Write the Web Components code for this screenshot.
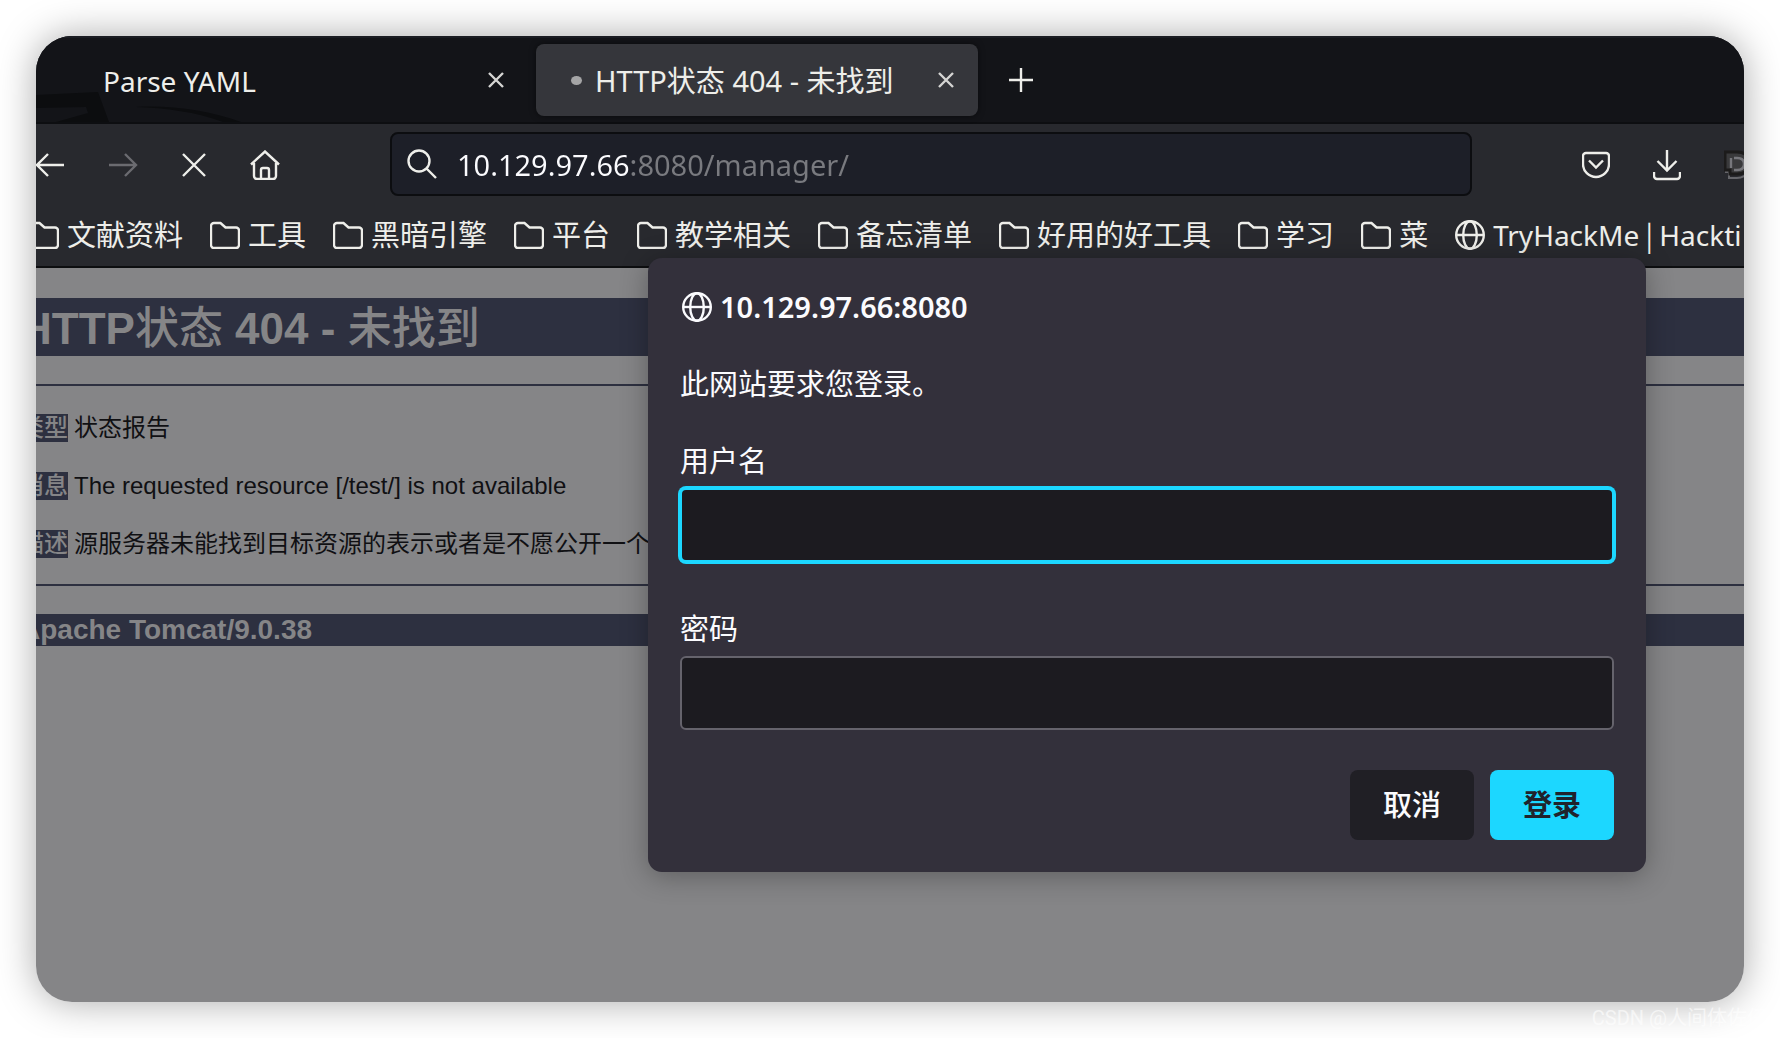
<!DOCTYPE html>
<html lang="zh-CN">
<head>
<meta charset="utf-8">
<title>HTTP状态 404 - 未找到</title>
<style>
  html { background: #fff; }
  body {
    margin: 0;
    font-family: "Noto Sans", "Noto Sans CJK SC", sans-serif;
    font-size: 29px;
    line-height: 40px;
  }
</style>
</head>
<body>
<browser-desktop></browser-desktop>

<script>
const ICONS = {
  close: ['0 0 16 16', '<path d="M1 1l14 14M15 1L1 15"/>'],
  plus: ['0 0 24 24', '<path d="M12 0v24M0 12h24"/>'],
  back: ['0 0 30 26', '<path d="M29 13H2M13 2L2 13l11 11"/>'],
  forward: ['0 0 30 26', '<path d="M1 13h27M17 2l11 11-11 11"/>'],
  stop: ['0 0 26 26', '<path d="M2 2l22 22M24 2L2 24"/>'],
  home: ['0 0 30 30', '<path d="M1 14.500L15 1.500l14 13M4 13v13a3 3 0 0 0 3 3h16a3 3 0 0 0 3-3V13M11 29V20a2 2 0 0 1 2-2h4a2 2 0 0 1 2 2v9"/>'],
  search: ['0 0 30 30', '<circle cx="12" cy="12" r="10.500"/><path d="M19.500 19.500L29 29"/>'],
  pocket: ['0 0 28 28', '<path d="M4 2h20a3 3 0 0 1 3 3v8a13 13 0 0 1-26 0V5a3 3 0 0 1 3-3zM7 9.500l7 7 7-7"/>'],
  download: ['0 0 28 32', '<path d="M14 1v20M4.500 12l9.500 9.500L23.500 12M1 23v4a3 3 0 0 0 3 3h20a3 3 0 0 0 3-3v-4"/>'],
  folder: ['0 0 30 28', '<path d="M4 2h6.500l5 4.500H26a3 3 0 0 1 3 3V24a3 3 0 0 1-3 3H4a3 3 0 0 1-3-3V5a3 3 0 0 1 3-3z"/>'],
  globe: ['0 0 30 30', '<circle cx="15" cy="15" r="13.800"/><ellipse cx="15" cy="15" rx="6.800" ry="13.800"/><path d="M1.500 15h27"/>'],
  dark: ['0 0 32 32', '<path stroke="#66666b" stroke-width="2" d="M1 23h4v6h8c8 0 13-6 13-13"/><path fill="#3a3a3c" stroke="#1c1b1b" stroke-width="3" d="M1 3h12c8 0 12 4 12 11s-4 11-12 11H6V21H1z"/><path stroke="#77777c" d="M7 9v10M10 9h3c5 0 7 2 7 6s-2 6-7 6h-3"/>']
};

class UiIcon extends HTMLElement {
  connectedCallback() {
    const [box, shape] = ICONS[this.getAttribute('name')];
    const [, , w, h] = box.split(' ');
    this.attachShadow({ mode: 'open' }).innerHTML = `
      <style>
        :host { display: block; flex: none; width: ${w}px; height: ${h}px; }
        svg { display: block; width: 100%; height: 100%; fill: none; stroke: currentColor; stroke-width: 2.4; }
      </style>
      <svg viewBox="${box}" aria-hidden="true">${shape}</svg>`;
  }
}
customElements.define('ui-icon', UiIcon);

function define(name, html) {
  const template = document.createElement('template');
  template.innerHTML = html;
  customElements.define(name, class extends HTMLElement {
    constructor() {
      super();
      this.attachShadow({ mode: 'open' }).append(template.content.cloneNode(true));
    }
  });
}

define('browser-tab', `
  <style>
    :host { display: flex; align-items: center; box-sizing: border-box; height: 72px; padding: 0 24px 0 35px; border-radius: 8px; }
    :host([active]) { background: #35363b; box-shadow: 0 0 6px rgba(0,0,0,.5); }
    .dot { flex: none; width: 11px; height: 9px; border-radius: 50%; background: #a5a5a6; margin-right: 13px; visibility: hidden; }
    :host([active]) .dot { visibility: visible; }
    .title { flex: 1; padding-top: 2px; white-space: nowrap; }
    button { all: unset; display: block; cursor: pointer; color: #d5d5d3; }
  </style>
  <span class="dot"></span><span class="title"><slot></slot></span>
  <button aria-label="关闭标签页"><ui-icon name="close"></ui-icon></button>`);

define('tab-strip', `
  <style>
    :host { display: flex; align-items: center; position: relative; box-sizing: border-box; height: 88px; background: #131418; border-top: 2px solid #1b1d23; border-bottom: 2px solid #0d0e11; color: #eeeeea; }
    .art { position: absolute; left: 0; bottom: 0; width: 220px; height: 30px; }
    browser-tab { position: relative; }
    .first { width: 484px; margin: 0 8px; font-size: 28px; }
    .second { width: 442px; }
    .add { all: unset; display: block; cursor: pointer; margin-left: 31px; }
  </style>
  <svg class="art" viewBox="0 0 220 30" aria-hidden="true">
    <path fill="#0c0d0f" d="M0 3L62 0 73 30H55L50 15 0 16zM20 30L52 21 58 30z"/>
    <path fill="#0c0d0f" d="M100 15c35-2 75 4 105 15h-18C160 20 130 16 100 15z"/>
  </svg>
  <browser-tab class="first">Parse YAML</browser-tab>
  <browser-tab class="second" active>HTTP状态 404 - 未找到</browser-tab>
  <button class="add" aria-label="新建标签页"><ui-icon name="plus"></ui-icon></button>`);

define('nav-bar', `
  <style>
    :host { display: flex; align-items: center; height: 80px; color: #eeeeea; }
    button { all: unset; display: block; cursor: pointer; flex: none; }
    .left { display: flex; align-items: center; gap: 43px; margin-left: -1px; padding-top: 2px; width: 355px; }
    .off { color: #6b6b70; }
    .url { flex: 1; display: flex; align-items: center; gap: 20px; box-sizing: border-box; height: 64px; padding: 0 15px; border: 2px solid #0c0d10; border-radius: 8px; background: #1d1f28; }
    input { all: unset; flex: 1; min-width: 0; padding-top: 2px; font-size: 29px; line-height: 40px; color: transparent; background: linear-gradient(90deg, #fbfbfe 173px, #797a7f 173px); -webkit-background-clip: text; background-clip: text; }
    .right { display: flex; align-items: center; gap: 43px; margin-left: 110px; margin-right: -12px; padding-top: 2px; }
  </style>
  <div class="left">
    <button aria-label="后退"><ui-icon name="back"></ui-icon></button>
    <button class="off" aria-label="前进"><ui-icon name="forward"></ui-icon></button>
    <button aria-label="停止"><ui-icon name="stop"></ui-icon></button>
    <button aria-label="主页"><ui-icon name="home"></ui-icon></button>
  </div>
  <div class="url"><ui-icon name="search"></ui-icon><input type="text" aria-label="地址" value="10.129.97.66:8080/manager/"></div>
  <div class="right">
    <button aria-label="Pocket"><ui-icon name="pocket"></ui-icon></button>
    <button aria-label="下载"><ui-icon name="download"></ui-icon></button>
    <button aria-label="扩展"><ui-icon name="dark"></ui-icon></button>
  </div>`);

define('bookmark-list', `
  <style>
    :host { display: flex; gap: 27px; height: 62px; margin-left: -7px; white-space: nowrap; color: #eeeeea; }
    a { display: flex; align-items: center; gap: 8px; flex: none; height: 62px; color: inherit; text-decoration: none; }
    .site { font-size: 28px; }
    .bar { font-family: "Noto Sans CJK SC", sans-serif; line-height: 1; }
  </style>
  <a href="#"><ui-icon name="folder"></ui-icon><span>文献资料</span></a>
  <a href="#"><ui-icon name="folder"></ui-icon><span>工具</span></a>
  <a href="#"><ui-icon name="folder"></ui-icon><span>黑暗引擎</span></a>
  <a href="#"><ui-icon name="folder"></ui-icon><span>平台</span></a>
  <a href="#"><ui-icon name="folder"></ui-icon><span>教学相关</span></a>
  <a href="#"><ui-icon name="folder"></ui-icon><span>备忘清单</span></a>
  <a href="#"><ui-icon name="folder"></ui-icon><span>好用的好工具</span></a>
  <a href="#"><ui-icon name="folder"></ui-icon><span>学习</span></a>
  <a href="#"><ui-icon name="folder"></ui-icon><span>菜</span></a>
  <a href="#" class="site"><ui-icon name="globe"></ui-icon><span>TryHackMe<span class="bar"> | </span>Hackti</span></a>`);

define('error-page', `
  <style>
    :host { display: block; box-sizing: border-box; margin-left: -16px; padding-top: 30px; color: #101013; font-family: "Liberation Sans", "Noto Sans CJK SC", sans-serif; font-size: 24px; line-height: 28px; white-space: nowrap; overflow: hidden; }
    h1, h3, p { margin: 0; }
    h1, h3, b { background: #2d3040; color: #858587; }
    h1 { padding-top: 4px; font-size: 44px; line-height: 54px; }
    h1 span { font-weight: 500; }
    h3 { font-size: 28px; line-height: 32px; }
    .rows { display: flex; flex-direction: column; gap: 30px; margin: 28px 0; padding: 28px 0 26px; border: solid #2d3040; border-width: 2px 0; }
    .rows p { height: 28px; display: flex; gap: 6px; }
    b { font-weight: 500; }
  </style>
  <h1>HTTP<span>状态</span> 404 - <span>未找到</span></h1>
  <div class="rows">
    <p><b>类型</b><span>状态报告</span></p>
    <p><b>消息</b><span>The requested resource [/test/] is not available</span></p>
    <p><b>描述</b><span>源服务器未能找到目标资源的表示或者是不愿公开一个</span></p>
  </div>
  <h3>Apache Tomcat/9.0.38</h3>`);

define('login-dialog', `
  <style>
    :host { display: block; box-sizing: border-box; padding: 29px 32px 32px; border-radius: 14px; background: #33303b; color: #fbfbfe; box-shadow: 0 4px 28px rgba(0,0,0,.3); }
    form { display: flex; flex-direction: column; }
    h2 { display: flex; align-items: center; gap: 8px; margin: 0; padding-left: 2px; font-size: 29px; line-height: 40px; font-weight: 600; }
    p { margin: 37px 0 0; }
    label { margin-top: 37px; }
    input { box-sizing: border-box; width: 100%; height: 74px; margin: 7px 0 0; padding: 0 16px; border: 2px solid #65636c; border-radius: 6px; background: #1c1b20; color: inherit; font: inherit; }
    .current { border-color: #1cd7ff; box-shadow: 0 0 0 2px #1cd7ff; }
    .second { margin-top: 47px; }
    .actions { display: flex; justify-content: flex-end; gap: 16px; margin-top: 40px; }
    button { width: 124px; height: 70px; padding: 0; border: 0; border-radius: 8px; font: inherit; font-weight: 500; background: #201f25; color: #fbfbfe; cursor: pointer; }
    .primary { background: #1cd7ff; color: #20232c; font-weight: 600; }
  </style>
  <form onsubmit="return false">
    <h2><ui-icon name="globe"></ui-icon><span>10.129.97.66:8080</span></h2>
    <p>此网站要求您登录。</p>
    <label for="user">用户名</label>
    <input id="user" class="current" type="text">
    <label for="pass" class="second">密码</label>
    <input id="pass" type="password">
    <div class="actions"><button type="button">取消</button><button class="primary">登录</button></div>
  </form>`);

define('browser-desktop', `
  <style>
    :host { display: block; box-sizing: border-box; position: relative; height: 100vh; padding: 36px; overflow: hidden; }
    main { position: relative; box-sizing: border-box; height: 100%; overflow: hidden; border-radius: 36px; background: #858587; }
    .shade { height: 100%; border-radius: 36px; box-shadow: 0 0 38px rgba(0,0,0,.34); }
    header { background: #28292e; border-bottom: 2px solid #0d0e10; }
    login-dialog { position: absolute; top: 222px; right: 98px; width: min(998px, 80%); }
    .mark { position: absolute; right: 13px; bottom: 6px; font-size: 20px; line-height: 28px; color: rgba(255,255,255,.6); font-family: Roboto, "Noto Sans CJK SC", sans-serif; }
  </style>
  <div class="shade"><main>
    <header><tab-strip></tab-strip><nav-bar></nav-bar><bookmark-list></bookmark-list></header>
    <error-page></error-page>
    <login-dialog></login-dialog>
  </main></div>
  <span class="mark">CSDN @人间体佐仔</span>`);
</script>
</body>
</html>
